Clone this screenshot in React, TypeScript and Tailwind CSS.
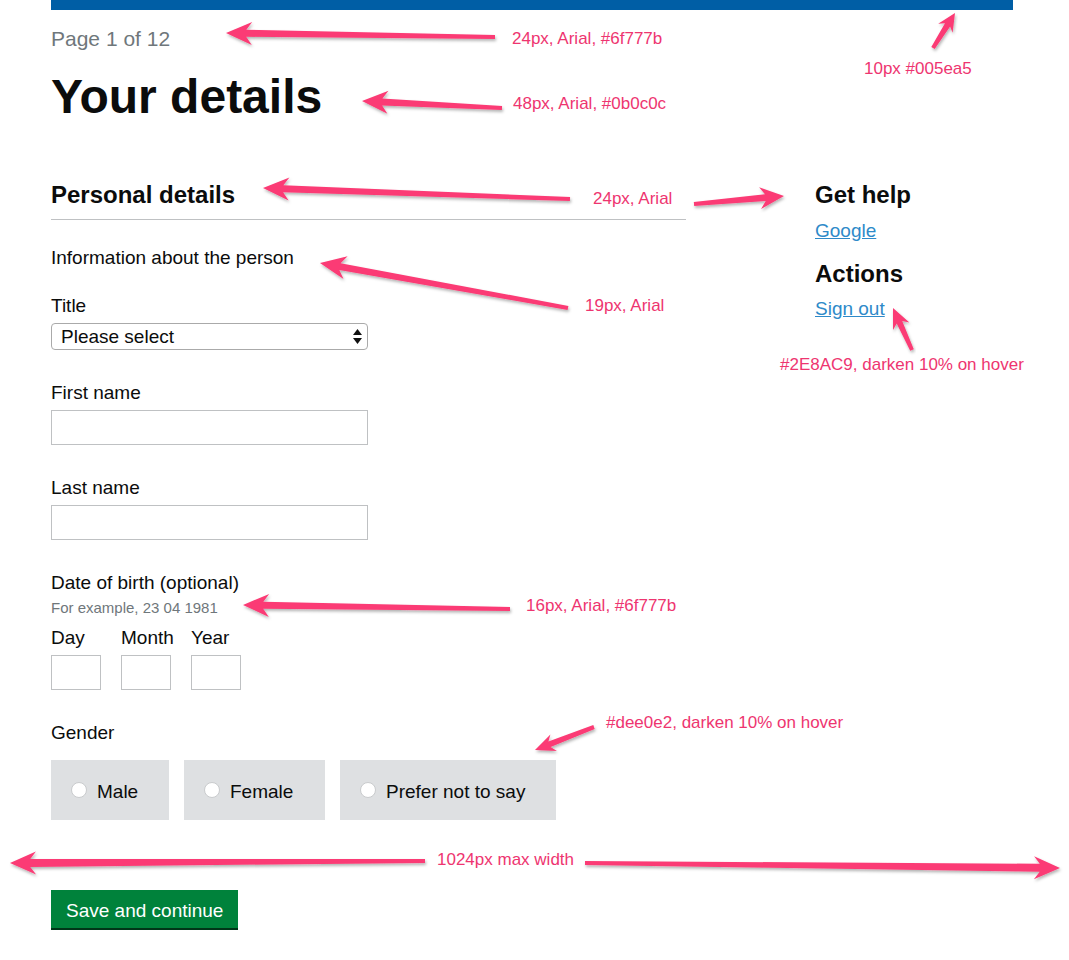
import React from 'react';

type Pt = [number, number];

// tapered annotation arrow, tail -> tip
function arrowPoints(tail: Pt, tip: Pt, w0 = 4, w1 = 7, headLen = 26, headW = 23) {
    const dx = tip[0] - tail[0];
    const dy = tip[1] - tail[1];
    const len = Math.hypot(dx, dy);
    const ux = dx / len;
    const uy = dy / len;
    const nx = -uy;
    const ny = ux;
    const bx = tip[0] - ux * headLen * 0.78;
    const by = tip[1] - uy * headLen * 0.78;
    const hx = tip[0] - ux * headLen;
    const hy = tip[1] - uy * headLen;
    const pts: Pt[] = [
        [tail[0] + (nx * w0) / 2, tail[1] + (ny * w0) / 2],
        [bx + (nx * w1) / 2, by + (ny * w1) / 2],
        [hx + (nx * headW) / 2, hy + (ny * headW) / 2],
        tip,
        [hx - (nx * headW) / 2, hy - (ny * headW) / 2],
        [bx - (nx * w1) / 2, by - (ny * w1) / 2],
        [tail[0] - (nx * w0) / 2, tail[1] - (ny * w0) / 2],
    ];
    return pts.map(p => `${p[0].toFixed(1)},${p[1].toFixed(1)}`).join(' ');
}

const arrows: { tail: Pt; tip: Pt; w0?: number; w1?: number; hl?: number; hw?: number }[] = [
    { tail: [495, 37], tip: [226, 33] },
    { tail: [933, 48], tip: [955, 13], w0: 4, w1: 6, hl: 18, hw: 17 },
    { tail: [502, 108], tip: [362, 101] },
    { tail: [570, 199], tip: [263, 188] },
    { tail: [694, 204], tip: [784, 196], w0: 4, w1: 7, hl: 24, hw: 22 },
    { tail: [568, 308], tip: [320, 263] },
    { tail: [912, 350], tip: [893, 308], w0: 4, w1: 6, hl: 20, hw: 18 },
    { tail: [510, 609], tip: [243, 605] },
    { tail: [594, 727], tip: [535, 750], w0: 4, w1: 6, hl: 20, hw: 18 },
    { tail: [425, 861], tip: [10, 863], w0: 4, w1: 8 },
    { tail: [585, 863], tip: [1060, 868], w0: 4, w1: 8 },
];

const notes: { text: string; x: number; y: number }[] = [
    { text: '24px, Arial, #6f777b', x: 512, y: 39 },
    { text: '10px #005ea5', x: 864, y: 69 },
    { text: '48px, Arial, #0b0c0c', x: 513, y: 104 },
    { text: '24px, Arial', x: 593, y: 199 },
    { text: '19px, Arial', x: 585, y: 306 },
    { text: '#2E8AC9, darken 10% on hover', x: 780, y: 365 },
    { text: '16px, Arial, #6f777b', x: 526, y: 606 },
    { text: '#dee0e2, darken 10% on hover', x: 606, y: 723 },
    { text: '1024px max width', x: 437, y: 860 },
];

function TextField() {
    return <input type="text" className="block w-[317px] h-[35px] border border-[#bfc1c3] bg-white outline-none" />;
}

function RadioBox({ label, width }: { label: string; width: string }) {
    return (
        <label className={`flex items-center h-[60px] pl-[20px] bg-[#dee0e2] hover:bg-[#c8cacb] cursor-pointer ${width}`}>
            <span className="w-[16px] h-[16px] rounded-full bg-white border border-[#c9cbcd] shrink-0" />
            <span className="ml-[10px] mt-[2px] text-[19px] leading-[25px]">{label}</span>
        </label>
    );
}

export default function App() {
    return (
        <div className="relative min-h-[960px] bg-white text-[#0b0c0c] font-['Liberation_Sans',Arial,sans-serif]">
            <div className="ml-[51px] w-[962px]">
                <div className="h-[10px] bg-[#005ea5]" />
                <p className="mt-[17px] text-[21px] leading-[24px] text-[#6f777b]">Page 1 of 12</p>
                <h1 className="mt-[22px] text-[48px] leading-[48px] font-bold">Your details</h1>

                <div className="flex mt-[59px]">
                    <main className="w-[635px]">
                        <h2 className="text-[24px] leading-[30px] font-bold pb-[9px] border-b border-[#bfc1c3]">Personal details</h2>
                        <p className="mt-[25px] text-[19px] leading-[25px]">Information about the person</p>

                        <p className="mt-[23px] text-[19px] leading-[25px]">Title</p>
                        <div className="relative mt-[5px] w-[317px] h-[27px]">
                            <select className="appearance-none w-full h-full pl-[9px] border border-[#aaaaaa] rounded-[4px] bg-white text-[19px] leading-[25px] outline-none">
                                <option>Please select</option>
                            </select>
                            <svg className="absolute right-[6px] top-[6px] pointer-events-none" width="9" height="15" viewBox="0 0 9 15">
                                <path d="M4.5 0 L9 6 L0 6 Z" fill="#111" />
                                <path d="M0 9 L9 9 L4.5 15 Z" fill="#111" />
                            </svg>
                        </div>

                        <p className="mt-[30px] text-[19px] leading-[25px]">First name</p>
                        <div className="mt-[5px]"><TextField /></div>

                        <p className="mt-[30px] text-[19px] leading-[25px]">Last name</p>
                        <div className="mt-[5px]"><TextField /></div>

                        <p className="mt-[30px] text-[19px] leading-[25px]">Date of birth (optional)</p>
                        <p className="mt-[3px] text-[15px] leading-[20px] text-[#6f777b]">For example, 23 04 1981</p>
                        <div className="flex gap-[20px] mt-[7px]">
                            {['Day', 'Month', 'Year'].map(part => (
                                <div key={part} className="w-[50px]">
                                    <p className="text-[19px] leading-[25px] whitespace-nowrap">{part}</p>
                                    <input type="text" className="block mt-[5px] w-[50px] h-[35px] border border-[#bfc1c3] outline-none" />
                                </div>
                            ))}
                        </div>

                        <p className="mt-[30px] text-[19px] leading-[25px]">Gender</p>
                        <div className="flex gap-[15px] mt-[15px]">
                            <RadioBox label="Male" width="w-[118px]" />
                            <RadioBox label="Female" width="w-[141px]" />
                            <RadioBox label="Prefer not to say" width="w-[216px]" />
                        </div>

                        <button className="mt-[70px] h-[40px] px-[15px] pt-[2px] bg-[#00823b] border-b-2 border-[#003618] text-white text-[19px] leading-[25px]">
                            Save and continue
                        </button>
                    </main>

                    <aside className="ml-[129px]">
                        <h3 className="text-[24px] leading-[30px] font-bold">Get help</h3>
                        <a href="#" className="block mt-[8px] text-[19px] leading-[25px] text-[#2e8ac9] underline hover:text-[#2470a3]">Google</a>
                        <h3 className="mt-[16px] text-[24px] leading-[30px] font-bold">Actions</h3>
                        <a href="#" className="block mt-[7px] text-[19px] leading-[25px] text-[#2e8ac9] underline hover:text-[#2470a3]">Sign out</a>
                    </aside>
                </div>
            </div>

            {/* annotation layer */}
            <svg className="absolute inset-0 pointer-events-none" width="1069" height="960" viewBox="0 0 1069 960">
                <defs>
                    <filter id="shade" x="-10%" y="-50%" width="120%" height="200%">
                        <feDropShadow dx="1" dy="2" stdDeviation="1.4" floodColor="#000" floodOpacity="0.3" />
                    </filter>
                </defs>
                {arrows.map((a, i) => (
                    <polygon
                        key={i}
                        points={arrowPoints(a.tail, a.tip, a.w0, a.w1, a.hl, a.hw)}
                        fill="#fb3b74"
                        filter="url(#shade)"
                        strokeLinejoin="round"
                    />
                ))}
            </svg>
            {notes.map(n => (
                <span
                    key={n.text}
                    className="absolute whitespace-nowrap text-[17px] leading-[18px] text-[#ee3570]"
                    style={{ left: n.x, top: n.y - 9 }}
                >
                    {n.text}
                </span>
            ))}
        </div>
    );
}
